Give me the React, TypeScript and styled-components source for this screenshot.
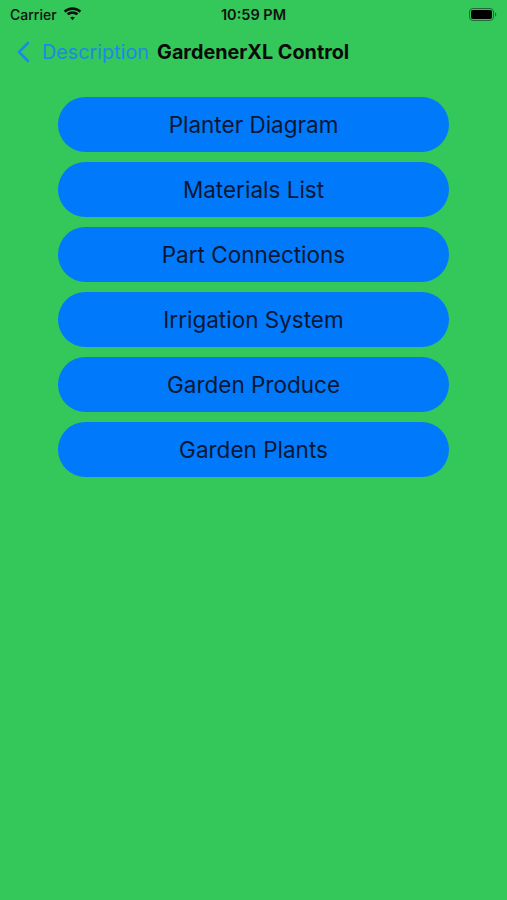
import styled, { createGlobalStyle } from 'styled-components';

const GlobalStyle = createGlobalStyle`
  html, body {
    margin: 0;
    padding: 0;
    background: #34c759;
  }
  body {
    font-family: Inter, "Liberation Sans", sans-serif;
  }
`;

const Screen = styled.div`
  width: 507px;
  height: 900px;
  background: #34c759;
  display: flex;
  flex-direction: column;
`;

const StatusBar = styled.div`
  height: 28px;
  display: grid;
  grid-template-columns: 1fr auto 1fr;
  align-items: center;
  padding: 0 10px;
  color: #111;
`;

const Carrier = styled.div`
  display: flex;
  align-items: center;
  gap: 6px;
  font-size: 14px;
  font-weight: 500;
`;

const Clock = styled.div`
  font-size: 14.5px;
  font-weight: 600;
`;

const Battery = styled.div`
  justify-self: end;
  display: flex;
  align-items: center;
`;

const NavBar = styled.div`
  height: 48px;
  display: flex;
  align-items: center;
  padding-left: 17px;
`;

const BackLink = styled.div`
  display: flex;
  align-items: center;
  gap: 12px;
  color: #1e88e8;
  font-size: 19.8px;
`;

const Title = styled.h1`
  margin: 0 0 0 8px;
  font-size: 19.8px;
  font-weight: 700;
  color: #0a0a0a;
`;

const Menu = styled.div`
  display: flex;
  flex-direction: column;
  gap: 10px;
  padding: 21px 58px 0;
`;

const MenuButton = styled.button`
  height: 55px;
  border: none;
  border-radius: 28px;
  background: #0079fb;
  color: #0b1733;
  font-family: Inter, "Liberation Sans", sans-serif;
  font-size: 22.5px;
  cursor: pointer;
`;

const items = [
  'Planter Diagram',
  'Materials List',
  'Part Connections',
  'Irrigation System',
  'Garden Produce',
  'Garden Plants',
];

export default function App() {
  return (
    <>
      <GlobalStyle />
      <Screen>
        <StatusBar>
          <Carrier>
            Carrier
            <svg width="19" height="14" viewBox="0 0 17 12">
              <path d="M8.5 2.4c2.4 0 4.6.9 6.2 2.4l1.6-1.7C14.2 1.2 11.5 0 8.5 0S2.8 1.2.7 3.1l1.6 1.7C3.9 3.3 6.1 2.4 8.5 2.4z" fill="#111" />
              <path d="M8.5 5.9c1.4 0 2.6.5 3.6 1.3l1.6-1.7C12.3 4.3 10.5 3.5 8.5 3.5S4.7 4.3 3.3 5.5l1.6 1.7c1-.8 2.2-1.3 3.6-1.3z" fill="#111" />
              <path d="M8.5 8.4c.8 0 1.5.3 2 .7L8.5 11.6 6.5 9.1c.5-.4 1.2-.7 2-.7z" fill="#111" />
            </svg>
          </Carrier>
          <Clock>10:59 PM</Clock>
          <Battery>
            <svg width="28" height="13" viewBox="0 0 28 13">
              <rect x="0.5" y="0.5" width="24" height="12" rx="3.5" fill="none" stroke="#1f6b33" />
              <rect x="2" y="2" width="21" height="9" rx="2" fill="#000" />
              <path d="M26 4.5v4c.8-.3 1.3-1.1 1.3-2s-.5-1.7-1.3-2z" fill="#1f6b33" />
            </svg>
          </Battery>
        </StatusBar>
        <NavBar>
          <BackLink>
            <svg width="13" height="22" viewBox="0 0 13 22">
              <path d="M11 2L2 11l9 9" fill="none" stroke="#1e88e8" strokeWidth="2.6" strokeLinecap="round" strokeLinejoin="round" />
            </svg>
            Description
          </BackLink>
          <Title>GardenerXL Control</Title>
        </NavBar>
        <Menu>
          {items.map((label) => (
            <MenuButton key={label}>{label}</MenuButton>
          ))}
        </Menu>
      </Screen>
    </>
  );
}
